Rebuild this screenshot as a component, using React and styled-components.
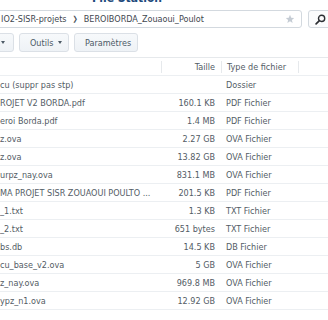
import React from "react";
import styled, { createGlobalStyle } from "styled-components";

const GlobalStyle = createGlobalStyle`
  html, body {
    margin: 0;
    padding: 0;
    background: #ffffff;
    overflow: hidden;
  }
  body {
    font-family: "DejaVu Sans Condensed", "DejaVu Sans", sans-serif;
    font-size: 9px;
    color: #535c65;
  }
`;

const Window = styled.div`
  width: 328px;
  height: 320px;
  overflow: hidden;
  background: #ffffff;
`;

const TitleBar = styled.div`
  height: 10px;
  overflow: hidden;
  display: flex;
  justify-content: center;
  padding-right: 74px;
`;

const Title = styled.div`
  margin-top: -8px;
  font-size: 12px;
  line-height: 13px;
  font-weight: bold;
  color: #1d4a7c;
`;

const PathRow = styled.div`
  display: flex;
  gap: 6px;
  height: 18px;
  margin-left: -4px;
  margin-right: -6px;
`;

const PathBox = styled.div`
  flex: 1;
  display: flex;
  align-items: center;
  gap: 6px;
  padding: 0 6px 0 4px;
  border: 1px solid #d3d9df;
  border-radius: 3px;
  background: #ffffff;
  white-space: nowrap;
`;

const Crumb = styled.span`
  color: #3f4850;
`;

const Chevron = styled.span`
  font-size: 7px;
  color: #4a535c;
`;

const Star = styled.svg`
  margin-left: auto;
  flex: none;
`;

const SearchButton = styled.div`
  width: 26px;
  box-sizing: border-box;
  flex: none;
  display: flex;
  align-items: center;
  padding-left: 6px;
  border: 1px solid #d3d9df;
  border-radius: 3px;
  background: #fbfcfd;
`;

const Toolbar = styled.div`
  display: flex;
  gap: 5px;
  height: 19px;
  margin-top: 5px;
`;

const Button = styled.div`
  display: flex;
  align-items: center;
  justify-content: ${(p) => (p.$edge ? "flex-end" : "flex-start")};
  gap: 5px;
  width: ${(p) => p.$width}px;
  margin-left: ${(p) => p.$offset || 0}px;
  padding: 0 ${(p) => (p.$edge ? 8 : 10)}px;
  box-sizing: border-box;
  border: 1px solid #dbe0e6;
  border-radius: 3px;
  background: linear-gradient(#f7f9fb, #eef2f6);
  color: #4d5a66;
  white-space: nowrap;
  overflow: hidden;
`;

const Caret = styled.span`
  flex: none;
  width: 0;
  height: 0;
  border-left: 2.5px solid transparent;
  border-right: 2.5px solid transparent;
  border-top: 3px solid #4d5a66;
`;

const Table = styled.div`
  margin-top: 5px;
  border-top: 1px solid #e6e9ec;
`;

const Row = styled.div`
  display: grid;
  grid-template-columns: 161px 60px 77px 1fr;
  height: 18px;
  box-sizing: border-box;
  border-bottom: 1px solid #eceff2;
  align-items: center;
  white-space: nowrap;
`;

const Cell = styled.div`
  overflow: hidden;
  text-align: ${(p) => (p.$right ? "right" : "left")};
  padding: ${(p) => (p.$right ? "0 6px 0 0" : p.$name ? "0" : "0 0 0 5px")};
`;

const HeadCell = styled.div`
  height: 12px;
  line-height: 12px;
  text-align: ${(p) => (p.$right ? "right" : "left")};
  padding: ${(p) => (p.$right ? "0 6px 0 0" : "0 0 0 5px")};
  border-left: 1px solid ${(p) => (p.$divider ? "#e6e9ec" : "transparent")};
  color: #535c65;
`;

const files = [
  ["cu (suppr pas stp)", "", "Dossier"],
  ["ROJET V2 BORDA.pdf", "160.1 KB", "PDF Fichier"],
  ["eroi Borda.pdf", "1.4 MB", "PDF Fichier"],
  ["z.ova", "2.27 GB", "OVA Fichier"],
  ["z.ova", "13.82 GB", "OVA Fichier"],
  ["urpz_nay.ova", "831.1 MB", "OVA Fichier"],
  ["MA PROJET SISR ZOUAOUI POULTO ...", "201.5 KB", "PDF Fichier"],
  ["_1.txt", "1.3 KB", "TXT Fichier"],
  ["_2.txt", "651 bytes", "TXT Fichier"],
  ["bs.db", "14.5 KB", "DB Fichier"],
  ["cu_base_v2.ova", "5 GB", "OVA Fichier"],
  ["z_nay.ova", "969.8 MB", "OVA Fichier"],
  ["ypz_n1.ova", "12.92 GB", "OVA Fichier"],
];

const App = () => (
  <Window>
    <GlobalStyle />
    <TitleBar>
      <Title>File Station</Title>
    </TitleBar>

    <PathRow>
      <PathBox>
        <Crumb>IO2-SISR-projets</Crumb>
        <Chevron>❯</Chevron>
        <Crumb>BEROIBORDA_Zouaoui_Poulot</Crumb>
        <Star width="10" height="10" viewBox="0 0 24 24">
          <path
            d="M12 2l2.9 6.9 7.1.6-5.4 4.7 1.7 7.3L12 17.6 5.7 21.5l1.7-7.3L2 9.5l7.1-.6z"
            fill="#c5ccd4"
          />
        </Star>
      </PathBox>
      <SearchButton>
        <svg width="11" height="11" viewBox="0 0 12 12">
          <circle cx="7.2" cy="4.8" r="3.4" fill="none" stroke="#2c2f33" strokeWidth="1.5" />
          <line x1="4.8" y1="7.2" x2="1.2" y2="10.8" stroke="#2c2f33" strokeWidth="1.8" strokeLinecap="round" />
        </svg>
      </SearchButton>
    </PathRow>

    <Toolbar>
      <Button $width={16} $offset={-4} $edge>
        <Caret />
      </Button>
      <Button $width={50}>
        Outils
        <Caret />
      </Button>
      <Button $width={64}>Paramètres</Button>
    </Toolbar>

    <Table>
      <Row>
        <HeadCell />
        <HeadCell $right $divider>
          Taille
        </HeadCell>
        <HeadCell $divider>Type de fichier</HeadCell>
        <HeadCell $divider />
      </Row>
      {files.map(([name, size, type], i) => (
        <Row key={i}>
          <Cell $name>{name}</Cell>
          <Cell $right>{size}</Cell>
          <Cell>{type}</Cell>
          <Cell />
        </Row>
      ))}
    </Table>
  </Window>
);

export default App;
